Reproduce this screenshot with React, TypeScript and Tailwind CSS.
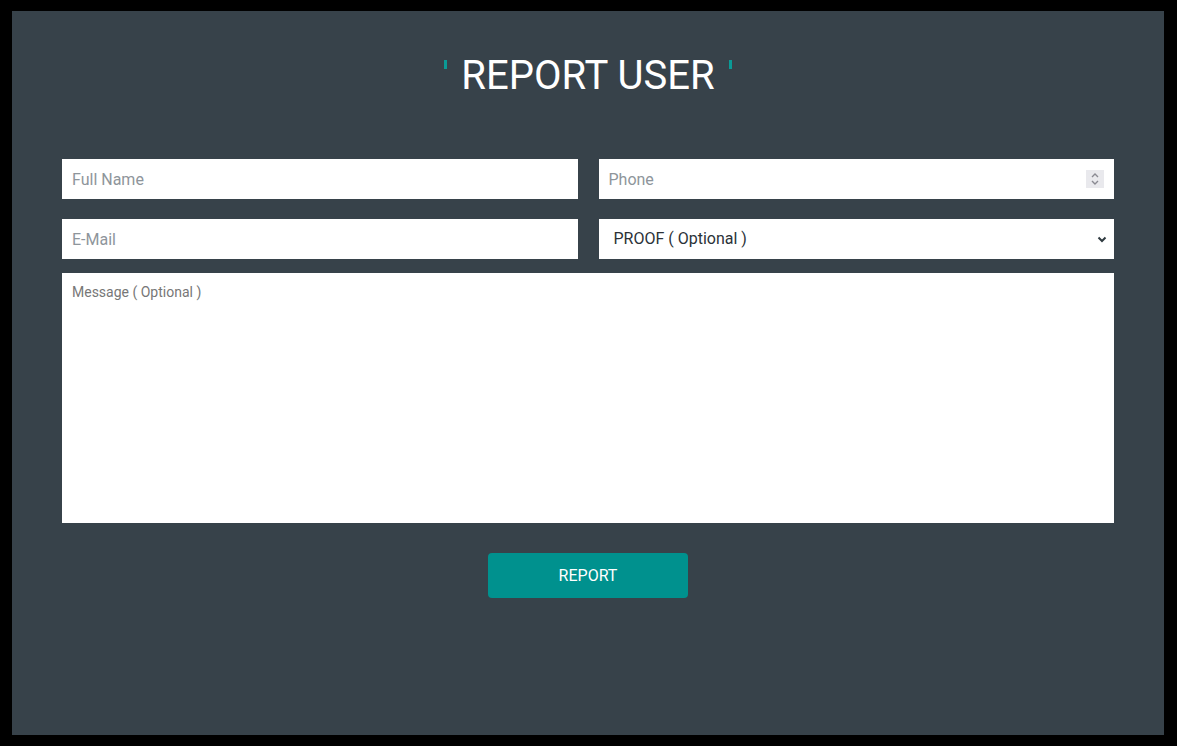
import { useState } from 'react';

const font = { fontFamily: 'Roboto, "Noto Sans", sans-serif' };

const App = () => {
  const [proof, setProof] = useState('');

  return (
    <div className="w-[1177px] h-[746px] bg-black pt-[11px] pl-[12px]" style={font}>
      <div className="w-[1152px] h-[724px] bg-[#37424a] pt-[41px] px-[50px]">
        {/* Title */}
        <div className="flex justify-center items-start gap-[14px]">
          <span className="mt-[8px] w-[3px] h-[9px] bg-[#0a9a96]" />
          <h1 className="text-[40px] leading-[48px] text-white font-normal">REPORT USER</h1>
          <span className="mt-[8px] w-[3px] h-[9px] bg-[#0a9a96]" />
        </div>

        <form className="mt-[59px]" onSubmit={e => e.preventDefault()}>
          <div className="grid grid-cols-2 gap-x-[21px] gap-y-[20px]">
            <input
              type="text"
              placeholder="Full Name"
              className="h-[40px] bg-white px-[10px] text-[16px] text-[#333] placeholder:text-[#8e959b] outline-none"
            />
            <div className="h-[40px] bg-white flex items-center pl-[10px] pr-[10px]">
              <input
                type="text"
                placeholder="Phone"
                className="flex-1 h-full text-[16px] text-[#333] placeholder:text-[#8e959b] outline-none bg-transparent"
              />
              <div className="w-[18px] h-[18px] bg-[#e9e9ed] flex flex-col items-center justify-center">
                <svg width="10" height="14" viewBox="0 0 10 14" fill="none" stroke="#8a8a92" strokeWidth="1.4">
                  <path d="M2 5 L5 2 L8 5" />
                  <path d="M2 9 L5 12 L8 9" />
                </svg>
              </div>
            </div>
            <input
              type="email"
              placeholder="E-Mail"
              className="h-[40px] bg-white px-[10px] text-[16px] text-[#333] placeholder:text-[#8e959b] outline-none"
            />
            <div className="h-[40px] bg-white flex items-center pl-[15px] pr-[6px]">
              <select
                value={proof}
                onChange={e => setProof(e.target.value)}
                className="flex-1 h-full appearance-none bg-transparent text-[16px] text-[#2b3238] outline-none"
              >
                <option value="">PROOF ( Optional )</option>
                <option value="screenshot">Screenshot</option>
                <option value="link">Link</option>
              </select>
              <svg width="12" height="12" viewBox="0 0 12 12" fill="none" stroke="#2f3a40" strokeWidth="2">
                <path d="M2.5 4.5 L6 8 L9.5 4.5" />
              </svg>
            </div>
          </div>

          <textarea
            placeholder="Message ( Optional )"
            className="mt-[14px] block w-full h-[250px] bg-white px-[10px] py-[10px] text-[14px] leading-[18px] text-[#333] placeholder:text-[#777] outline-none resize-none"
          />

          <div className="flex justify-center mt-[30px]">
            <button
              type="submit"
              className="w-[200px] h-[45px] rounded-[4px] bg-[#00918e] text-white text-[16px]"
            >
              REPORT
            </button>
          </div>
        </form>
      </div>
    </div>
  );
};

export default App;
